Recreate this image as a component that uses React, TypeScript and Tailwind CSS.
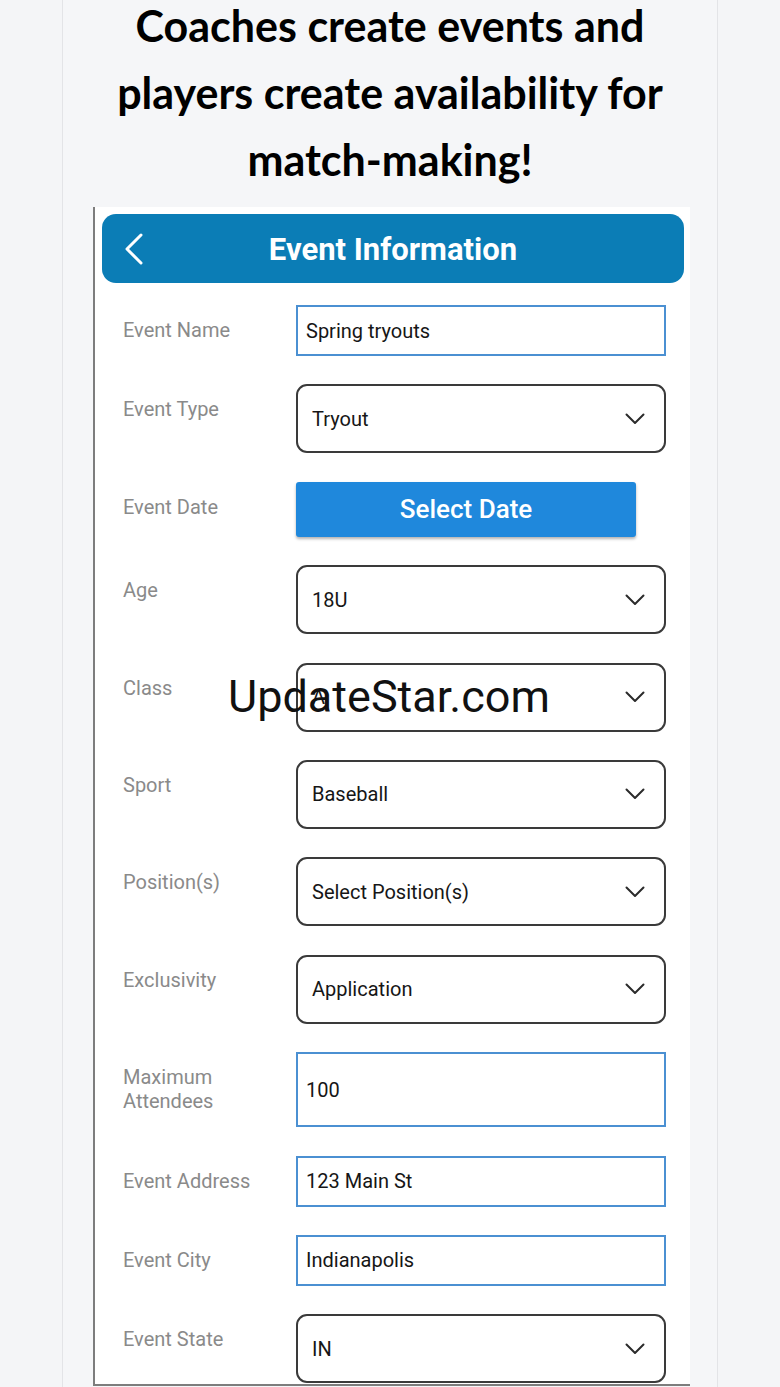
import React from 'react';

const ChevronDown: React.FC = () => (
  <svg width="20" height="12" viewBox="0 0 20 12" fill="none">
    <path d="M1.5 1.5 L10 10 L18.5 1.5" stroke="#2b2b2b" strokeWidth="2" strokeLinecap="round" strokeLinejoin="round" />
  </svg>
);

const TextField: React.FC<{ value: string; tall?: boolean }> = ({ value, tall }) => (
  <div
    className={`w-[370px] ${tall ? 'h-[75px]' : 'h-[51px]'} border-2 border-[#4b90d2] pl-[8px] flex items-center text-[20px] text-[#161616]`}
  >
    {value}
  </div>
);

const SelectField: React.FC<{ value: string }> = ({ value }) => (
  <div className="w-[370px] h-[69px] rounded-[11px] border-2 border-[#3a3a3a] pl-[14px] pr-[19px] flex items-center justify-between text-[20px] text-[#161616]">
    <span>{value}</span>
    <ChevronDown />
  </div>
);

const Row: React.FC<{ label: React.ReactNode; children: React.ReactNode }> = ({ label, children }) => (
  <div className="flex items-start">
    <div className="w-[173px] pt-[13px] text-[20px] leading-6 text-[#8a8a8a]">{label}</div>
    {children}
  </div>
);

export default function App() {
  return (
    <div
      className="relative h-[1387px] overflow-hidden bg-[#f4f5f7]"
      style={{ fontFamily: 'Roboto, "Noto Sans", sans-serif' }}
    >
      <div className="mx-auto w-[656px] h-full flex flex-col border-x border-[#e3e4e7] bg-[#f5f6f8]">
        {/* Marketing headline */}
        <h1
          className="-mt-[8px] text-center text-[43px] leading-[67px] font-bold text-black"
          style={{ fontFamily: 'Lato, "Open Sans", sans-serif' }}
        >
          Coaches create events and
          <br />
          players create availability for
          <br />
          match-making!
        </h1>

        {/* Phone screenshot */}
        <div className="ml-[30px] mt-[14px] w-[597px] bg-white border-l-2 border-b-2 border-[#7d7d7d] pt-[7px] pb-[1px]">
          <div className="ml-[7px] w-[582px] h-[69px] rounded-[14px] bg-[#0b7db6] flex items-center relative">
            <svg className="absolute left-[20px]" width="24" height="34" viewBox="0 0 24 34" fill="none">
              <path d="M19 3 L5 17 L19 31" stroke="white" strokeWidth="3" strokeLinecap="round" strokeLinejoin="round" />
            </svg>
            <div className="w-full pt-[3px] text-center text-[31px] font-bold text-white">Event Information</div>
          </div>

          <div className="pl-[28px] pt-[22px] flex flex-col gap-[28.4px]">
            <Row label="Event Name">
              <TextField value="Spring tryouts" />
            </Row>
            <Row label="Event Type">
              <SelectField value="Tryout" />
            </Row>
            <Row label="Event Date">
              <div className="w-[340px] h-[55px] rounded-[3px] bg-[#1f88dc] shadow-[0_2px_3px_rgba(0,0,0,0.3)] flex items-center justify-center text-[26px] font-medium text-white">
                Select Date
              </div>
            </Row>
            <Row label="Age">
              <SelectField value="18U" />
            </Row>
            <Row label="Class">
              <SelectField value="A" />
            </Row>
            <Row label="Sport">
              <SelectField value="Baseball" />
            </Row>
            <Row label="Position(s)">
              <SelectField value="Select Position(s)" />
            </Row>
            <Row label="Exclusivity">
              <SelectField value="Application" />
            </Row>
            <Row label={<>Maximum<br />Attendees</>}>
              <TextField value="100" tall />
            </Row>
            <Row label="Event Address">
              <TextField value="123 Main St" />
            </Row>
            <Row label="Event City">
              <TextField value="Indianapolis" />
            </Row>
            <Row label="Event State">
              <SelectField value="IN" />
            </Row>
          </div>
        </div>
      </div>

      {/* Watermark */}
      <div className="absolute left-[228px] top-[674px] text-[45px] leading-none text-[#111]">UpdateStar.com</div>
    </div>
  );
}
